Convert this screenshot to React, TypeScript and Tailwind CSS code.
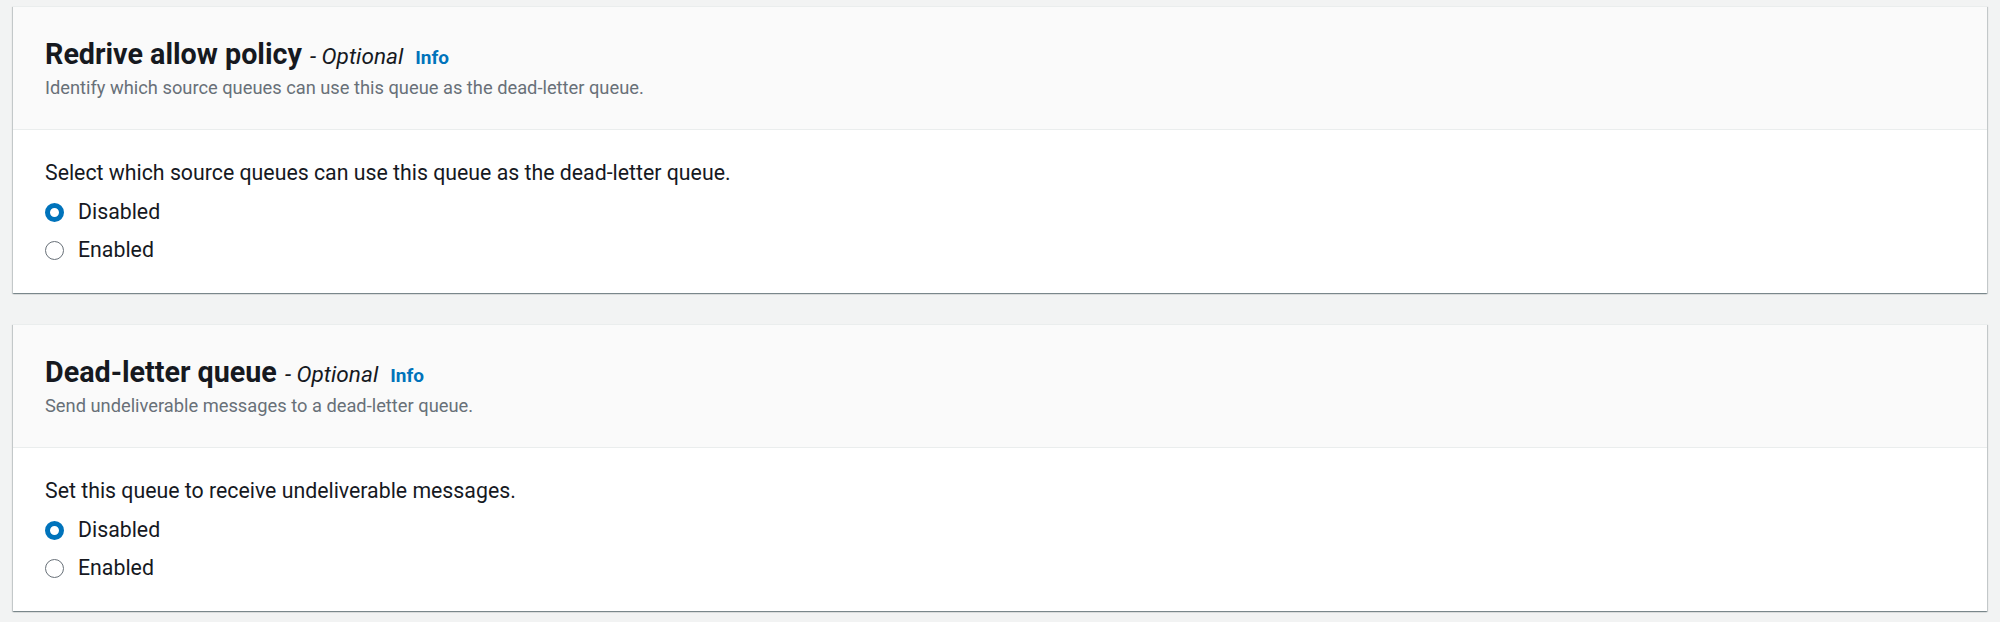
import React from "react";

type Section = {
  title: string;
  description: string;
  prompt: string;
};

const sections: Section[] = [
  {
    title: "Redrive allow policy",
    description: "Identify which source queues can use this queue as the dead-letter queue.",
    prompt: "Select which source queues can use this queue as the dead-letter queue.",
  },
  {
    title: "Dead-letter queue",
    description: "Send undeliverable messages to a dead-letter queue.",
    prompt: "Set this queue to receive undeliverable messages.",
  },
];

const Radio = ({ checked, label }: { checked: boolean; label: string }) => (
  <label className="flex items-center gap-[14px] h-[28px] cursor-pointer">
    {checked ? (
      <span className="w-[19px] h-[19px] rounded-full border-[5px] border-[#0073bb] bg-white shrink-0" />
    ) : (
      <span className="w-[19px] h-[19px] rounded-full border-[1.5px] border-[#687078] bg-white shrink-0" />
    )}
    <span className="text-[21.3px] leading-[28px] text-[#16191f]">{label}</span>
  </label>
);

const Panel = ({ section }: { section: Section }) => (
  <div className="bg-white border-t border-[#eaeded] shadow-[0_1px_1px_0_rgba(0,28,36,0.3),1px_1px_1px_0_rgba(0,28,36,0.15),-1px_1px_1px_0_rgba(0,28,36,0.15)]">
    {/* Header */}
    <div className="bg-[#fafafa] border-b border-[#eaeded] px-[32px] pt-[31px] pb-[29px]">
      <div className="flex items-baseline h-[32px]">
        <h2 className="text-[28.7px] leading-[32px] font-bold text-[#16191f]">{section.title}</h2>
        <span className="ml-[8px] text-[22.6px] italic text-[#16191f]">- Optional</span>
        <a className="ml-[12px] text-[19px] font-bold text-[#0073bb]">Info</a>
      </div>
      <p className="mt-[6px] text-[18.3px] leading-[24px] text-[#687078]">{section.description}</p>
    </div>
    {/* Body */}
    <div className="px-[32px] pt-[29px] pb-[29px]">
      <p className="text-[21.3px] leading-[28px] text-[#16191f]">{section.prompt}</p>
      <div className="mt-[11px] flex flex-col gap-[10px]">
        <Radio checked label="Disabled" />
        <Radio checked={false} label="Enabled" />
      </div>
    </div>
  </div>
);

export default function App() {
  return (
    <div className="min-h-[622px] bg-[#f2f3f3] px-[13px] pt-[6px] pb-[10px] font-['Roboto',sans-serif]">
      <div className="flex flex-col gap-[31px]">
        {sections.map((s) => (
          <Panel key={s.title} section={s} />
        ))}
      </div>
    </div>
  );
}
